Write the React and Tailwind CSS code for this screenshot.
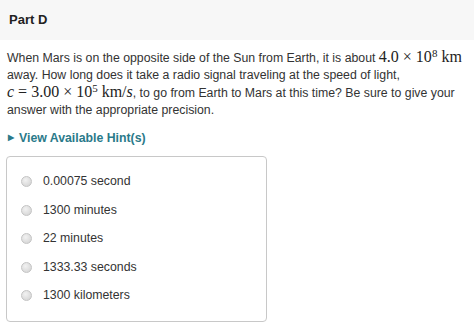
const options = ['0.00075 second', '1300 minutes', '22 minutes', '1333.33 seconds', '1300 kilometers'];

const M = ({ children }) => (
  <span className="whitespace-nowrap font-['Liberation_Serif',serif] text-[16px] leading-none text-[#222]">{children}</span>
);

const Sup = ({ children }) => <sup className="top-[-0.5em] text-[11px] leading-none">{children}</sup>;

export default function App() {
  return (
    <div className="min-h-[327px] w-[474px] bg-white font-['Liberation_Sans',Arial,sans-serif] text-[#333]">
      <div className="flex h-[40px] items-center bg-[#f7f7f7] px-[9px]">
        <h2 className="text-[13px] font-bold text-[#222]">Part D</h2>
      </div>

      <p className="mt-[9px] px-[7px] text-[12.3px] leading-[17px]">
        When Mars is on the opposite side of the Sun from Earth, it is about{' '}
        <M>
          4.0 × 10<Sup>8</Sup> km
        </M>{' '}
        away. How long does it take a radio signal traveling at the speed of light,{' '}
        <M>
          <i>c</i> = 3.00 × 10<Sup>5</Sup> km/<i>s</i>
        </M>
        , to go from Earth to Mars at this time? Be sure to give your answer with the appropriate precision.
      </p>

      <div className="mt-[10px] flex items-center gap-[5px] px-[8px] text-[12.3px] font-bold text-[#2a7a8a]">
        <span className="text-[8px]">▶</span>
        <span>View Available Hint(s)</span>
      </div>

      <div className="mx-[6px] mt-[9px] w-[261px] rounded-[4px] border border-[#c8c8c8] pb-[11px] pt-[10px]">
        {options.map((o) => (
          <label key={o} className="flex h-[28.5px] items-center gap-[11px] pl-[14px] text-[12.3px]">
            <span className="h-[11px] w-[11px] rounded-full border border-[#c4c4c4] bg-[radial-gradient(circle_at_40%_35%,#f2f2f2,#d0d0d0)]" />
            <span>{o}</span>
          </label>
        ))}
      </div>
    </div>
  );
}
